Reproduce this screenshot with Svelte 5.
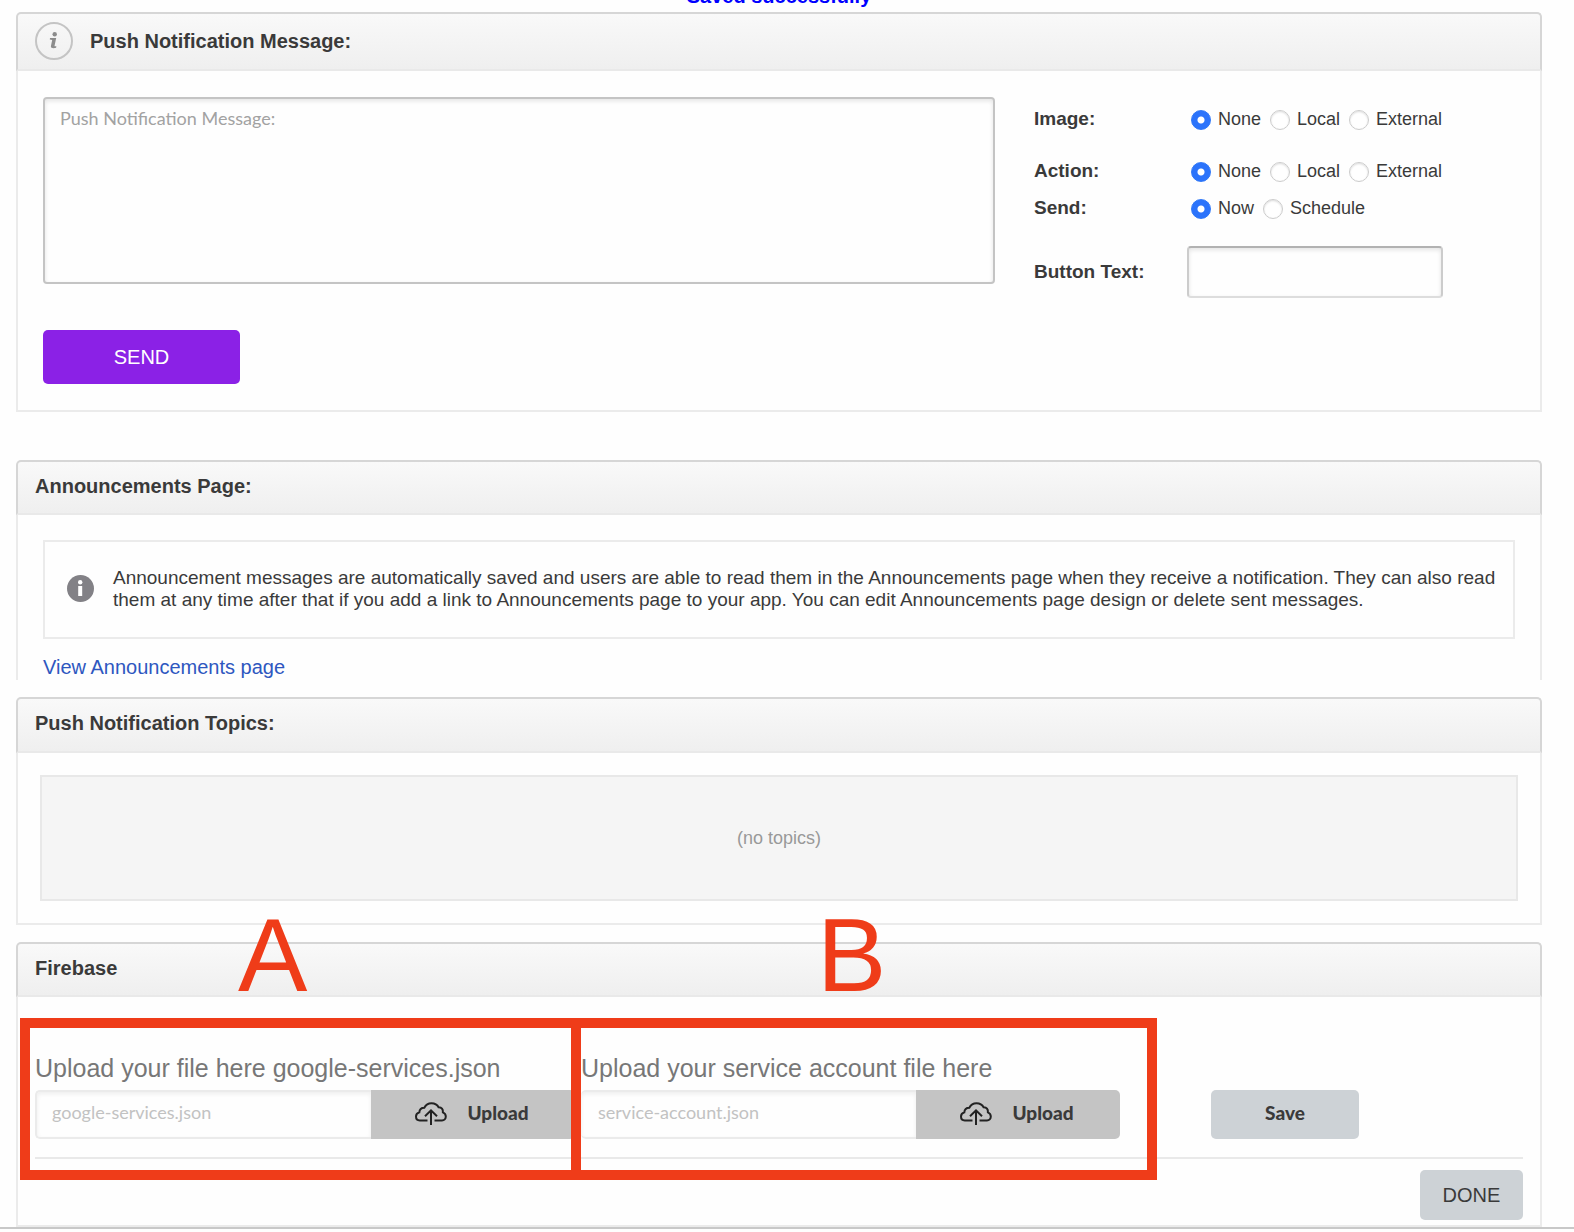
<script lang="ts">
  const optionRows = [
    { name: 'image', label: 'Image:', choices: ['None', 'Local', 'External'] },
    { name: 'action', label: 'Action:', choices: ['None', 'Local', 'External'] },
    { name: 'send', label: 'Send:', choices: ['Now', 'Schedule'] },
  ];

  const uploads = [
    { id: 'google-services', mark: 'A', label: 'Upload your file here google-services.json', file: 'google-services.json' },
    { id: 'service-account', mark: 'B', label: 'Upload your service account file here', file: 'service-account.json' },
  ];

  let message = $state('');
  let buttonText = $state('');
  let selected = $state<Record<string, string>>({ image: 'None', action: 'None', send: 'Now' });
  let files = $state<Record<string, string>>({ 'google-services': '', 'service-account': '' });
</script>

<main>
  <p class="status">Saved successfully</p>

  <section class="panel">
    <header class="tall">
      <svg class="help" viewBox="0 0 38 38" aria-hidden="true">
        <circle cx="19" cy="19" r="18" fill="none" stroke="#c4c4c4" stroke-width="2" />
        <circle cx="19.700" cy="12.200" r="2.200" fill="#8c8c8c" />
        <path d="M15 16h6.200l-1.700 7.900c0 .5.500.5 1.900.3l-.3 1.600c-1.700.7-5.500.9-5.200-1.500l1.300-6.400-2.400-.3z" fill="#8c8c8c" />
      </svg>
      <h2>Push Notification Message:</h2>
    </header>
    <div class="body message">
      <form class="compose" onsubmit={(e) => e.preventDefault()}>
        <textarea
          aria-label="Push Notification Message"
          placeholder="Push Notification Message:"
          bind:value={message}
        ></textarea>
        <button class="send" type="submit">SEND</button>
      </form>
      <div class="options">
        {#each optionRows as row (row.name)}
          <div class="option {row.name}" role="radiogroup" aria-labelledby="{row.name}-label">
            <span class="option-label" id="{row.name}-label">{row.label}</span>
            <div class="choices">
              {#each row.choices as choice (choice)}
                <label>
                  <input type="radio" name={row.name} value={choice} bind:group={selected[row.name]} />
                  {choice}
                </label>
              {/each}
            </div>
          </div>
        {/each}
        <div class="option">
          <label class="option-label" for="button-text">Button Text:</label>
          <input class="button-text" id="button-text" type="text" bind:value={buttonText} />
        </div>
      </div>
    </div>
  </section>

  <section class="panel announcements">
    <header><h2>Announcements Page:</h2></header>
    <div class="body">
      <div class="notice">
        <svg viewBox="0 0 27 27" aria-hidden="true">
          <circle cx="13.500" cy="13.500" r="13.500" fill="#828186" />
          <circle cx="13.200" cy="7.200" r="2.200" fill="#fff" />
          <path d="M11.200 11h4v10h-4z" fill="#fff" />
        </svg>
        <p>
          Announcement messages are automatically saved and users are able to read them in the
          Announcements page when they receive a notification. They can also read them at any time
          after that if you add a link to Announcements page to your app. You can edit Announcements
          page design or delete sent messages.
        </p>
      </div>
      <a href="#announcements">View Announcements page</a>
    </div>
  </section>

  <section class="panel topics">
    <header><h2>Push Notification Topics:</h2></header>
    <div class="body">
      <p class="empty">(no topics)</p>
    </div>
  </section>

  <section class="panel firebase">
    <header><h2>Firebase</h2></header>
    <div class="body">
      <div class="uploads">
        {#each uploads as upload (upload.id)}
          <div class="upload">
            <span class="mark" aria-hidden="true">{upload.mark}</span>
            <label for={upload.id}>{upload.label}</label>
            <div class="file">
              <input id={upload.id} type="text" placeholder={upload.file} bind:value={files[upload.id]} />
              <button type="button">
                <svg viewBox="0 0 32 24" aria-hidden="true">
                  <path
                    d="M12.500 18.500H4.800C2.600 18.500 1 16.900 1 14.600c0-2 1.200-3.600 3.300-4.200C4.500 7.500 6.500 5.700 9.300 5.700 10.800 2.800 13.500 1.200 16.500 1.200c3.300 0 5.800 1.500 7.100 4.100 2.800.2 4.500 2.200 4.300 5 1.800.8 2.900 2.400 2.900 4.300 0 2.200-1.600 3.900-3.800 3.900h-7.500M16 23V8.500M10 14.200 16 8.300l6 5.900"
                    fill="none"
                    stroke="#222"
                    stroke-width="2"
                  />
                </svg>
                Upload
              </button>
            </div>
          </div>
        {/each}
        <button class="save" type="button">Save</button>
      </div>
      <div class="actions">
        <button class="done" type="button">DONE</button>
      </div>
    </div>
  </section>
</main>

<style>
  :global(body) {
    background: #fefefe;
  }

  main {
    padding: 0 32px 0 16px;
    border-bottom: 2px solid #c8c8c8;
    box-shadow: 0 2px 3px #ccc;
    color: #3a3a3a;
    font-family: Arial, 'Liberation Sans', sans-serif;
    font-size: 18px;
    line-height: 22px;
  }

  * {
    box-sizing: border-box;
  }

  button,
  input,
  textarea {
    font-family: inherit;
    font-size: inherit;
    color: inherit;
  }

  button {
    border: 0;
    border-radius: 5px;
    cursor: pointer;
  }

  h2,
  p {
    margin: 0;
  }

  .status {
    height: 12px;
    display: flex;
    align-items: flex-end;
    justify-content: center;
    padding-bottom: 4px;
    color: #00f;
    font-size: 20px;
    font-weight: bold;
    line-height: 24px;
  }

  header {
    display: flex;
    align-items: center;
    gap: 17px;
    height: 55px;
    padding: 0 17px 4px;
    border: 2px solid #d6d6d6;
    border-bottom-color: #e9e9e9;
    border-radius: 5px 5px 0 0;
    background: linear-gradient(#f9f9f9, #efefef);
  }

  header.tall {
    height: 59px;
    padding-bottom: 1px;
  }

  h2 {
    font-size: 20px;
    line-height: 24px;
  }

  .help {
    width: 38px;
    height: 38px;
  }

  .body {
    padding: 25px;
    border: 2px solid #ebebeb;
    border-top: 0;
  }

  .message {
    display: flex;
    gap: 39px;
    padding: 26px 25px;
  }

  .compose {
    flex: 1;
    display: flex;
    flex-direction: column;
    align-items: flex-start;
    gap: 46px;
  }

  textarea {
    display: block;
    width: 100%;
    height: 187px;
    padding: 8px 15px;
    border: 2px solid #c4c4c4;
    border-radius: 4px;
    background: #fefefe;
    box-shadow: inset 0 2px 4px #e4e4e4;
    font-family: Lato, sans-serif;
    line-height: 22px;
    resize: none;
  }

  textarea::placeholder {
    color: #a2a2a2;
    opacity: 1;
  }

  .send {
    width: 197px;
    height: 54px;
    background: #8b21e6;
    color: #fff;
    font-size: 20px;
  }

  .options {
    width: 481px;
    padding-top: 10px;
  }

  .option {
    display: flex;
    align-items: center;
  }

  .option.image {
    margin-bottom: 29px;
  }

  .option.action {
    margin-bottom: 14px;
  }

  .option.send {
    width: auto;
    height: auto;
    margin-bottom: 27px;
    background: none;
    color: inherit;
    font-size: inherit;
  }

  .option-label {
    width: 153px;
    font-size: 19px;
    font-weight: bold;
  }

  .choices {
    display: flex;
    gap: 9px;
    padding-left: 4px;
  }

  .choices label {
    display: flex;
    align-items: center;
    gap: 7px;
  }

  input[type='radio'] {
    appearance: none;
    width: 20px;
    height: 20px;
    margin: 3px 0 0;
    border: 1px solid #ccc;
    border-radius: 50%;
    background: #fff;
    box-shadow: inset 0 1px 2px #ddd;
  }

  input[type='radio']:checked {
    border-color: #2e77f8;
    background: radial-gradient(circle, #fff 3px, #2b73fb 4px);
    box-shadow: none;
  }

  .button-text {
    width: 256px;
    height: 52px;
    padding: 0 15px;
    border: 2px solid #ccc;
    border-top-color: #b2b2b2;
    border-bottom-color: #ddd;
    border-radius: 4px;
    background: #fefefe;
    box-shadow: inset 0 2px 4px #e4e4e4;
  }

  .announcements {
    margin-top: 48px;
  }

  .announcements .body {
    padding-bottom: 0;
    border-bottom: 0;
  }

  .notice {
    display: flex;
    align-items: center;
    gap: 19px;
    height: 99px;
    padding: 0 8px 2px 22px;
    border: 2px solid #ebebeb;
    font-size: 19px;
  }

  .notice svg {
    flex: none;
    width: 27px;
    height: 27px;
  }

  .announcements a {
    display: block;
    width: fit-content;
    padding: 16px 0 1px;
    color: #2e57c0;
    font-size: 20px;
    line-height: 24px;
    text-decoration: none;
  }

  .topics {
    margin-top: 17px;
  }

  .topics header {
    height: 56px;
  }

  .topics .body {
    padding: 22px;
  }

  .empty {
    height: 126px;
    display: flex;
    align-items: center;
    justify-content: center;
    border: 2px solid #e8e8e8;
    background: #f5f5f5;
    color: #999;
  }

  .firebase {
    margin-top: 17px;
  }

  .firebase .body {
    padding: 21px 17px 5px 2px;
  }

  .uploads {
    position: relative;
    display: flex;
    align-items: flex-end;
    height: 162px;
  }

  .uploads::after {
    content: '';
    position: absolute;
    z-index: -1;
    right: 0;
    bottom: 21px;
    left: 15px;
    height: 2px;
    background: #e9e9e9;
  }

  .upload {
    position: relative;
    display: flex;
    flex-direction: column;
    width: 561px;
    height: 162px;
    padding: 28px 0 0 5px;
    border: 10px solid #ef3c19;
  }

  .upload + .upload {
    width: 586px;
    margin-left: -10px;
    padding-left: 0;
  }

  .upload label {
    height: 34px;
    color: #777;
    font-size: 25px;
    line-height: 24px;
  }

  .mark {
    position: absolute;
    top: -133px;
    left: 208px;
    color: #ef3c19;
    font-size: 104px;
    line-height: 120px;
  }

  .upload + .upload .mark {
    left: 236px;
  }

  .file {
    display: flex;
    height: 49px;
    margin-right: -4px;
  }

  .upload + .upload .file {
    margin-right: 27px;
  }

  .file input {
    flex: 1;
    min-width: 0;
    padding: 0 15px 5px;
    border: 2px solid #ebebeb;
    border-right: 0;
    border-radius: 5px 0 0 5px;
    background: #fefefe;
    box-shadow: inset 0 2px 4px #eee;
    font-family: Lato, sans-serif;
  }

  .upload + .upload .file input {
    padding-left: 17px;
    border-left: 0;
  }

  .file input::placeholder {
    color: #c2c2c2;
    opacity: 1;
  }

  .file button {
    display: flex;
    align-items: center;
    justify-content: center;
    gap: 20px;
    width: 204px;
    padding: 0 2px 4px 0;
    border-radius: 0 5px 5px 0;
    background: #c4c4c4;
    font-family: Lato, sans-serif;
    font-size: 19px;
    font-weight: 900;
  }

  .file svg {
    width: 32px;
    height: 24px;
    margin-top: 3px;
  }

  .save {
    width: 148px;
    height: 49px;
    margin: 0 0 41px 54px;
    padding: 0 0 4px;
    background: #cdd2d6;
    font-family: Lato, sans-serif;
    font-size: 19px;
    font-weight: 900;
  }

  .actions {
    display: flex;
    justify-content: flex-end;
    margin-top: -10px;
  }

  .done {
    width: 103px;
    height: 50px;
    background: #cdd2d6;
    font-size: 20px;
  }
</style>
